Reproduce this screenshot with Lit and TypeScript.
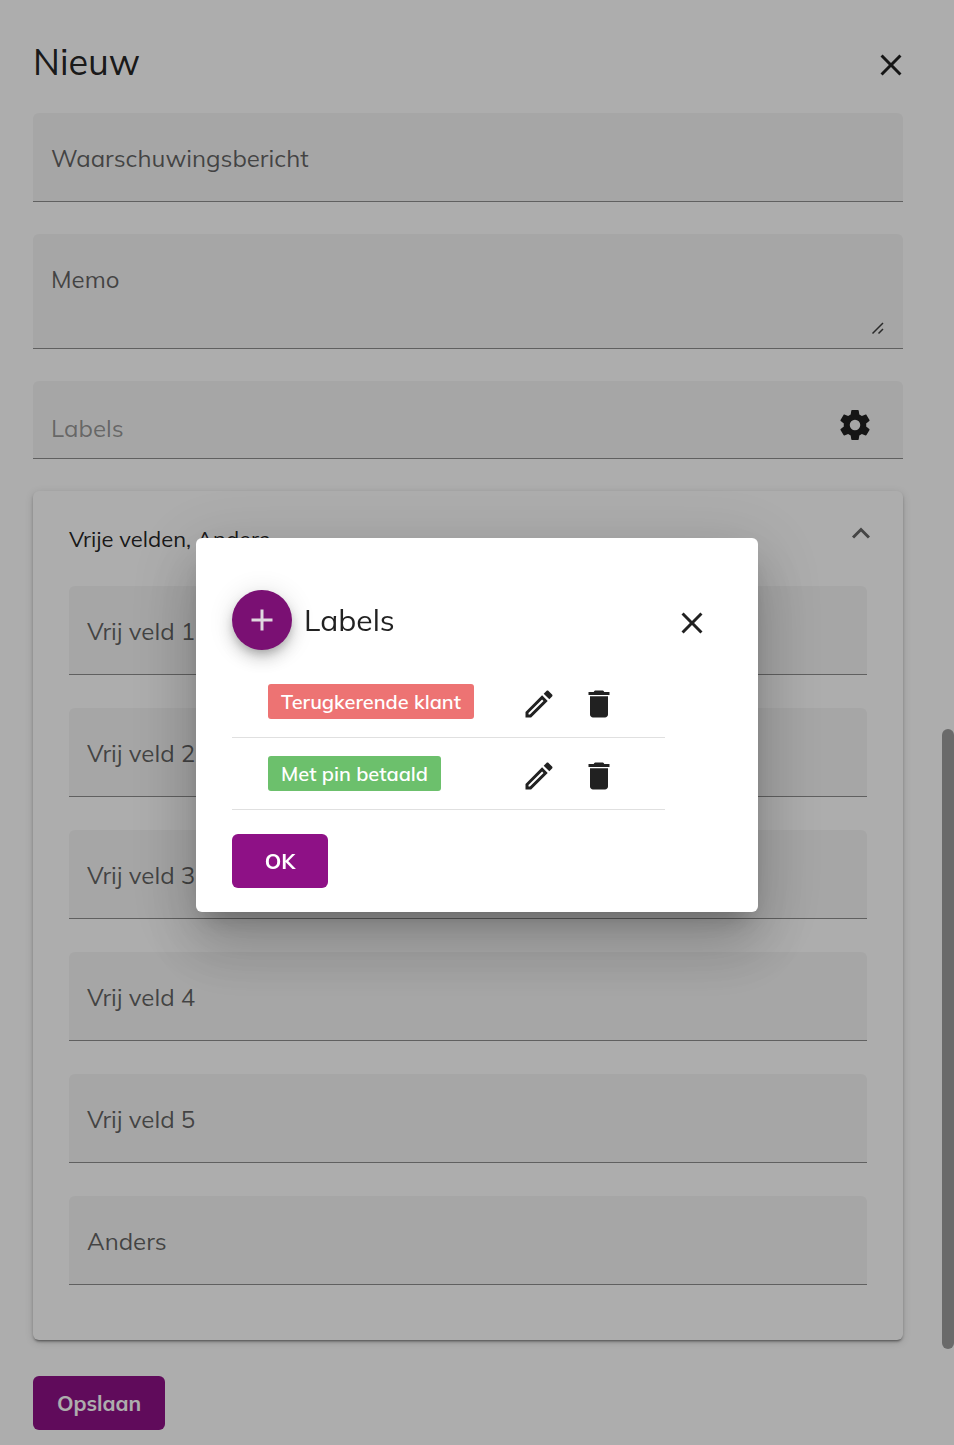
import { LitElement, html, css, svg } from "lit";
import { customElement } from "lit/decorators.js";

const icons = {
  close: svg`<path d="M19 6.41 17.59 5 12 10.59 6.41 5 5 6.41 10.59 12 5 17.59 6.41 19 12 13.41 17.59 19 19 17.59 13.41 12z"/>`,
  add: svg`<path d="M19 13h-6v6h-2v-6H5v-2h6V5h2v6h6v2z"/>`,
  gear: svg`<path d="M12,15.5A3.5,3.5 0 0,1 8.5,12A3.5,3.5 0 0,1 12,8.5A3.5,3.5 0 0,1 15.5,12A3.5,3.5 0 0,1 12,15.5M19.43,12.97C19.47,12.65 19.5,12.33 19.5,12C19.5,11.67 19.47,11.34 19.43,11L21.54,9.37C21.73,9.22 21.78,8.95 21.66,8.73L19.66,5.27C19.54,5.05 19.27,4.96 19.05,5.05L16.56,6.05C16.04,5.66 15.5,5.32 14.87,5.07L14.5,2.42C14.46,2.18 14.25,2 14,2H10C9.75,2 9.54,2.18 9.5,2.42L9.13,5.07C8.5,5.32 7.96,5.66 7.44,6.05L4.95,5.05C4.73,4.96 4.46,5.05 4.34,5.27L2.34,8.73C2.21,8.95 2.27,9.22 2.46,9.37L4.57,11C4.53,11.34 4.5,11.67 4.5,12C4.5,12.33 4.53,12.65 4.57,12.97L2.46,14.63C2.27,14.78 2.21,15.05 2.34,15.27L4.34,18.73C4.46,18.95 4.73,19.03 4.95,18.95L7.44,17.94C7.96,18.34 8.5,18.68 9.13,18.93L9.5,21.58C9.54,21.82 9.75,22 10,22H14C14.25,22 14.46,21.82 14.5,21.58L14.87,18.93C15.5,18.67 16.04,18.34 16.56,17.94L19.05,18.95C19.27,19.03 19.54,18.95 19.66,18.73L21.66,15.27C21.78,15.05 21.73,14.78 21.54,14.63L19.43,12.97Z"/>`,
  pencil: svg`<path d="M14.06 9 15 9.94 5.92 19H5v-.92L14.06 9M17.66 3c-.25 0-.51.1-.7.29l-1.83 1.83 3.75 3.75 1.83-1.83c.39-.39.39-1.04 0-1.41l-2.34-2.34c-.2-.2-.45-.29-.71-.29m-3.6 3.19L3 17.25V21h3.75L17.81 9.94l-3.75-3.75z"/>`,
  trash: svg`<path d="M6 19c0 1.1.9 2 2 2h8c1.1 0 2-.9 2-2V6.8H6V19zM19 4h-3.5c-.3-.7-.8-1-1.5-1h-4c-.7 0-1.2.3-1.5 1H5v2h14V4z"/>`,
  chevron: svg`<path d="M6.7 15 12 9.7 17.3 15" fill="none" stroke="currentColor" stroke-width="2"/>`,
};

const icon = (name: keyof typeof icons) =>
  html`<svg class="icon" viewBox="0 0 24 24" aria-hidden="true">${icons[name]}</svg>`;

const freeFields = ["Vrij veld 1", "Vrij veld 2", "Vrij veld 3", "Vrij veld 4", "Vrij veld 5", "Anders"];

const labels = [
  { name: "Terugkerende klant", tone: "red" },
  { name: "Met pin betaald", tone: "green" },
];

@customElement("app-root")
export class AppRoot extends LitElement {
  static styles = css`
    :host {
      display: block;
      position: relative;
      min-height: 100vh;
      background: #fff;
      color: rgba(0, 0, 0, 0.87);
      font-family: Mulish, Muli, Nunito, Lato, sans-serif;
      font-size: 24px;
      line-height: 32px;
    }
    * {
      box-sizing: border-box;
    }
    button,
    input,
    textarea {
      display: block;
      font: inherit;
      color: inherit;
      border: 0;
      margin: 0;
      padding: 0;
      background: none;
      outline: none;
    }
    h1,
    h2 {
      margin: 0;
      font-weight: 400;
    }
    .icon {
      display: block;
      width: 36px;
      height: 36px;
      fill: currentColor;
    }
    .page {
      padding: 32px 51px 15px 33px;
    }
    .header {
      display: flex;
      align-items: center;
      justify-content: space-between;
      margin-bottom: 21px;
    }
    .close {
      margin: 6px -6px 0 0;
    }
    .title {
      font-size: 36px;
      line-height: 60px;
    }
    .stack {
      display: grid;
      gap: 32px;
    }
    .field {
      display: grid;
      min-height: 89px;
      padding: 0 18px;
      background: #f5f5f5;
      border-bottom: 1px solid #8e8e8e;
      border-radius: 6px 6px 0 0;
    }
    .field > * {
      grid-area: 1 / 1;
    }
    .caption {
      padding-top: 29px;
      color: rgba(0, 0, 0, 0.6);
      pointer-events: none;
    }
    .memo {
      min-height: 115px;
    }
    .area {
      resize: none;
      padding-top: 29px;
    }
    .grip {
      place-self: end;
      width: 14px;
      height: 14px;
      margin-bottom: 13px;
      stroke: rgba(0, 0, 0, 0.75);
      stroke-width: 1.5;
      fill: none;
    }
    .labels {
      min-height: 78px;
      grid-template-columns: 1fr auto;
      align-items: center;
      padding-right: 30px;
    }
    .labels .caption {
      padding-top: 16px;
      color: rgba(0, 0, 0, 0.4);
    }
    .labels .gear {
      grid-area: 1 / 2;
      padding-top: 10px;
    }
    .card {
      padding: 30px 36px 55px;
      border-radius: 6px;
      background: #fff;
      box-shadow: 0 3px 2px -2px rgba(0, 0, 0, 0.3), 0 2px 3px rgba(0, 0, 0, 0.2), 0 2px 8px rgba(0, 0, 0, 0.14);
    }
    .card-head {
      display: flex;
      width: 100%;
      justify-content: space-between;
      padding-bottom: 29px;
      font-size: 22px;
      line-height: 36px;
      text-align: left;
    }
    .card-head .icon {
      margin: -6px -12px 0 0;
      color: rgba(0, 0, 0, 0.6);
    }
    .free {
      display: grid;
      gap: 33px;
    }
    .action {
      height: 54px;
      padding: 0 24px;
      border-radius: 6px;
      background: #8e1186;
      color: #fff;
      font-size: 21px;
      font-weight: 700;
    }
    .save {
      margin-top: 36px;
    }
    .thumb {
      position: absolute;
      right: 0;
      top: 50.45%;
      width: 12px;
      height: 42.9%;
      border-radius: 6px;
      background: #9d9d9d;
    }
    .overlay {
      position: fixed;
      inset: 0;
      display: flex;
      align-items: center;
      justify-content: center;
      padding-top: 5px;
      background: rgba(0, 0, 0, 0.32);
    }
    .dialog {
      width: 562px;
      padding: 52px 36px 24px;
      border-radius: 6px;
      background: #fff;
      box-shadow: 0 16px 22px -10px rgba(0, 0, 0, 0.2), 0 36px 57px 4px rgba(0, 0, 0, 0.14),
        0 14px 69px 12px rgba(0, 0, 0, 0.12);
    }
    .dialog-head {
      display: flex;
      align-items: center;
      gap: 12px;
      margin-bottom: 16px;
    }
    .fab {
      display: grid;
      place-items: center;
      width: 60px;
      height: 60px;
      border-radius: 50%;
      background: #7a1073;
      color: #e0d8df;
      box-shadow: 0 5px 8px -2px rgba(0, 0, 0, 0.2), 0 9px 15px rgba(0, 0, 0, 0.14), 0 2px 27px rgba(0, 0, 0, 0.12);
    }
    .dialog-title {
      flex: 1;
      font-size: 30px;
      line-height: 40px;
    }
    .dialog-close {
      margin: 6px 12px 0 0;
    }
    .list {
      width: 433px;
      border-collapse: collapse;
    }
    .list td {
      height: 72px;
      padding: 0 12px;
      border-bottom: 1px solid #e0e0e0;
    }
    .list .name {
      padding: 0 0 2px 36px;
    }
    .list .tool {
      width: 60px;
      padding-top: 4px;
    }
    .list .last {
      width: 96px;
    }
    .chip {
      display: inline-block;
      padding: 0 13px;
      border-radius: 3px;
      color: #fff;
      font-size: 20px;
      font-weight: 600;
      line-height: 35px;
      vertical-align: middle;
    }
    .red {
      background: #ed7373;
    }
    .green {
      background: #6cc06c;
    }
    .ok {
      width: 96px;
      margin-top: 24px;
    }
  `;

  private field(name: string, id: string) {
    return html`<div class="field">
      <label class="caption" for=${id}>${name}</label>
      <input id=${id} type="text" />
    </div>`;
  }

  render() {
    return html`
      <main class="page">
        <header class="header">
          <h1 class="title">Nieuw</h1>
          <button class="close" aria-label="Sluiten">${icon("close")}</button>
        </header>
        <div class="stack">
          ${this.field("Waarschuwingsbericht", "warning")}
          <div class="field memo">
            <label class="caption" for="memo">Memo</label>
            <textarea class="area" id="memo"></textarea>
            <svg class="grip" viewBox="0 0 14 14" aria-hidden="true"><path d="M1.5 12.5 12 2M7.5 12.5 12 8" /></svg>
          </div>
          <div class="field labels">
            <label class="caption" for="labels">Labels</label>
            <input id="labels" type="text" />
            <button class="gear" aria-label="Labels beheren">${icon("gear")}</button>
          </div>
          <section class="card">
            <button class="card-head" aria-expanded="true">
              <span>Vrije velden, Anders</span>${icon("chevron")}
            </button>
            <div class="free">${freeFields.map((name, i) => this.field(name, `free-${i}`))}</div>
          </section>
        </div>
        <button class="action save">Opslaan</button>
      </main>
      <div class="thumb"></div>
      <div class="overlay">
        <div class="dialog" role="dialog" aria-modal="true" aria-labelledby="dialog-title">
          <header class="dialog-head">
            <button class="fab" aria-label="Label toevoegen">${icon("add")}</button>
            <h2 class="dialog-title" id="dialog-title">Labels</h2>
            <button class="dialog-close" aria-label="Sluiten">${icon("close")}</button>
          </header>
          <table class="list">
            <tbody>
              ${labels.map(
                (label) => html`<tr>
                  <td class="name"><span class="chip ${label.tone}">${label.name}</span></td>
                  <td class="tool"><button aria-label="Bewerken">${icon("pencil")}</button></td>
                  <td class="tool last"><button aria-label="Verwijderen">${icon("trash")}</button></td>
                </tr>`
              )}
            </tbody>
          </table>
          <button class="action ok">OK</button>
        </div>
      </div>
    `;
  }
}
